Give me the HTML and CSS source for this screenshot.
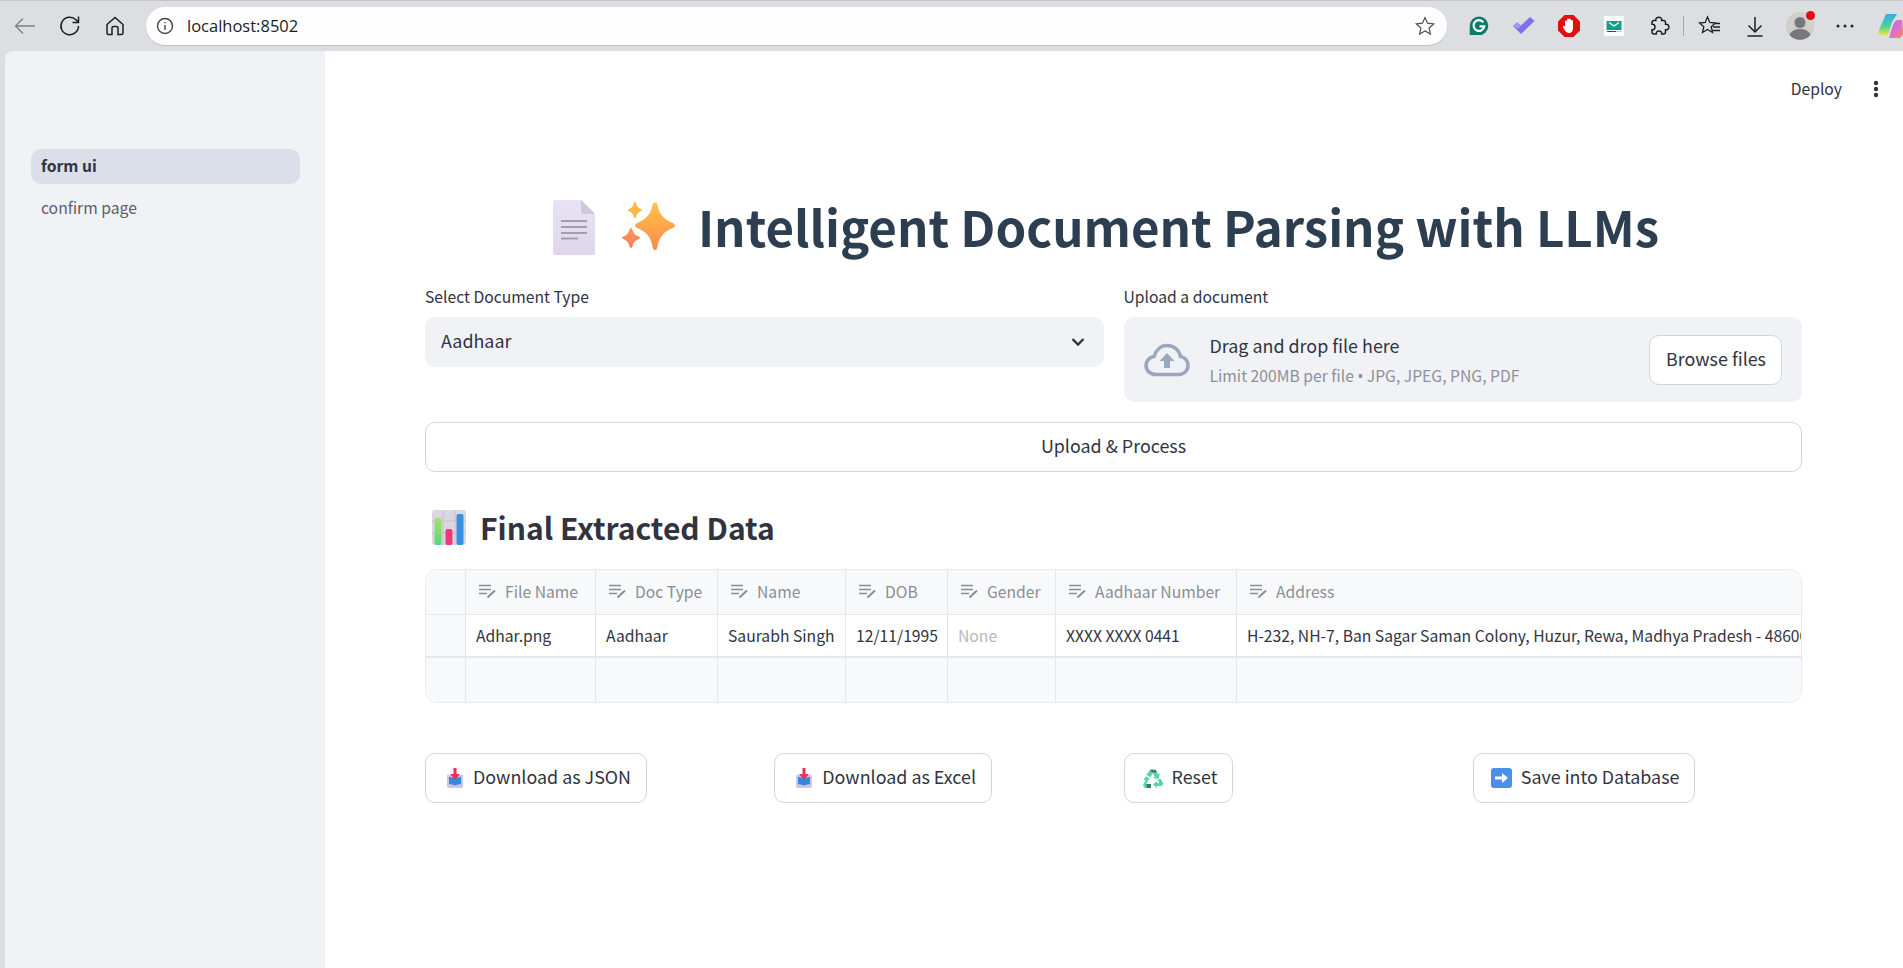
FILE: index.html
```html
<!DOCTYPE html>
<html lang="en">
<head>
<meta charset="utf-8">
<title>form ui</title>
<link rel="stylesheet" href="styles.css">
</head>
<body>
<div class="window">
  <div class="toolbar">
    <div class="tool"><svg width="24" height="24" viewBox="0 0 24 24" class="ln-grey"><path d="M22 12H3M10 4.500l-7.500 7.500 7.500 7.500"/></svg></div>
    <div class="tool"><svg width="24" height="24" viewBox="0 0 24 24" class="ln-dark"><path d="M20.500 12a8.800 8.800 0 1 1-2.600-6.300L20.500 8.500M20.500 2.500v6h-6"/></svg></div>
    <div class="tool"><svg width="24" height="24" viewBox="0 0 24 24" class="ln-dark"><path d="M4 10.500 12 3.500l8 7V19a1.500 1.500 0 0 1-1.500 1.500H15v-6.500a1.500 1.500 0 0 0-1.500-1.500h-3A1.500 1.500 0 0 0 9 14v6.500H5.500A1.500 1.500 0 0 1 4 19z"/></svg></div>
    <div class="urlbar">
      <svg width="18" height="18" viewBox="0 0 18 18" class="ln-info"><circle cx="9" cy="9" r="7.500"/><path d="M9 8v5M9 5v1.300"/></svg>
      <span class="url">localhost:8502</span>
      <svg class="url-star ln-grey2" width="22" height="22" viewBox="0 0 24 24"><path d="M12 2.800l2.800 6.100 6.700.800-5 4.500 1.400 6.600-5.900-3.300-5.900 3.300 1.400-6.600-5-4.500 6.700-.800z"/></svg>
    </div>
    <div class="exts">
      <div class="tool"><svg width="20" height="20" viewBox="0 0 20 20"><path d="M10 .5a9.300 9.300 0 1 1 0 18.600H.7V10A9.300 9.300 0 0 1 10 .5z" fill="#0c7a66"/><path d="M14.300 6.300A5.400 5.400 0 1 0 15.300 10.300H10.500" fill="none" stroke="#fff" stroke-width="2.200"/></svg></div>
      <div class="tool"><svg width="22" height="22" viewBox="0 0 22 22"><path d="M0 11l4-3.500 4 3L17 2l4.500 4L8 19z" fill="#7f6fe8"/><path d="M0 11l4-3.500 4 3-2.500 3.500z" fill="#a398ee"/></svg></div>
      <div class="tool"><svg width="22" height="22" viewBox="0 0 22 22"><path d="M6.500 0h9L22 6.500v9L15.500 22h-9L0 15.500v-9z" fill="#e20f0f"/><path d="M7 11V6.500a1 1 0 0 1 2 0V4.500a1 1 0 0 1 2 0v.2a1 1 0 0 1 2 0V6a1 1 0 0 1 2 0v7.500c0 2.500-1.500 4.500-4 4.500-2 0-3-1-4-2.500L5 12.500c-.6-1 .8-2 1.500-1z" fill="#fff"/></svg></div>
      <div class="tool"><svg width="20" height="20" viewBox="0 0 20 20"><rect width="20" height="20" rx="1" fill="#fbfdfc"/><rect x="2.500" y="5" width="15" height="9" fill="#11a08c"/><path d="M5 6.500l5 3.500 5-3.500" fill="none" stroke="#fff" stroke-width="1.200"/><path d="M3 15.500h9" stroke="#444" stroke-width="1"/><path d="M12.500 15.500h5" stroke="#8fd8cc" stroke-width="1"/></svg></div>
      <div class="tool"><svg width="24" height="24" viewBox="0 0 24 24" class="ln-dark"><path d="M8.800 6.500C8 2 15.500 2 14.700 6.500H16.500a2 2 0 0 1 2 2V10.200C23 9.500 23 16.500 18.500 15.800V18a2 2 0 0 1-2 2H14.700C15.500 16 8.500 16 9.300 20H7a2 2 0 0 1-2-2V15.800C9 16.500 9 9.500 5 10.200V8.500a2 2 0 0 1 2-2z"/></svg></div>
      <div class="sep"></div>
      <div class="tool"><svg width="24" height="24" viewBox="0 0 24 24" class="ln-dark thin"><path d="M9.500 3l2.300 5.500 5.700.5-4.300 3.700 1.300 5.800-5-3-5 3 1.300-5.800L1.500 9l5.700-.5zM16.500 9.500H22M15 13h7M14.500 16.500H22"/></svg></div>
      <div class="tool"><svg width="24" height="24" viewBox="0 0 24 24" class="ln-dark"><path d="M12 3v15M5.500 11.500 12 18l6.500-6.500M4.500 22h15"/></svg></div>
      <div class="tool avatar">
        <svg width="28" height="28" viewBox="0 0 28 28"><circle cx="14" cy="14" r="14" fill="#d0cfcc"/><circle cx="14" cy="10.500" r="5.500" fill="#77767a"/><path d="M3.500 23c1.500-4 5.500-6 10.500-6s9 2 10.500 6a14 14 0 0 1-21 0z" fill="#77767a"/></svg>
        <span class="dot"></span>
      </div>
      <div class="tool"><svg width="20" height="6" viewBox="0 0 20 6" fill="#222"><circle cx="3" cy="3" r="1.500"/><circle cx="10" cy="3" r="1.500"/><circle cx="17" cy="3" r="1.500"/></svg></div>
      <div class="copilot"><svg width="26" height="26" viewBox="0 0 26 26"><defs><linearGradient id="cpa" x1="0" y1="0" x2="0" y2="1"><stop offset="0" stop-color="#3aa9f0"/><stop offset=".55" stop-color="#45d0a0"/><stop offset="1" stop-color="#f0e040"/></linearGradient><linearGradient id="cpb" x1="0" y1="0" x2="1" y2="1"><stop offset="0" stop-color="#9a6ff0"/><stop offset=".6" stop-color="#e86fc0"/><stop offset="1" stop-color="#f58a5a"/></linearGradient></defs><path d="M8 1h11l-5 8-4 13H4C1.500 22 0 20 1 17z" fill="url(#cpa)"/><path d="M11 25l4-13c1-3 3-5 5-5h4l1 12c0 3-2 6-4 6z" fill="url(#cpb)"/></svg></div>
    </div>
  </div>
  <div class="app">
    <aside class="sidebar">
      <a class="nav-item nav-active">form ui</a>
      <a class="nav-item">confirm page</a>
    </aside>
    <main class="main">
      <header class="app-header">
        <span class="deploy">Deploy</span>
        <svg width="6" height="18" viewBox="0 0 6 18" fill="#31333f"><circle cx="3" cy="3" r="2.200"/><circle cx="3" cy="9" r="2.200"/><circle cx="3" cy="15" r="2.200"/></svg>
      </header>
      <h1 class="title">
        <svg class="doc-icon" width="42" height="55" viewBox="0 0 42 55"><defs><linearGradient id="docg" x1="0" y1="0" x2="0" y2="1"><stop offset="0" stop-color="#e9e2f3"/><stop offset="1" stop-color="#dfd6ec"/></linearGradient></defs><path d="M2 0h26l14 14v39a2 2 0 0 1-2 2H2a2 2 0 0 1-2-2V2a2 2 0 0 1 2-2z" fill="url(#docg)"/><path d="M28 0l14 14H31a3 3 0 0 1-3-3z" fill="#cfc8da"/><path d="M8 21h26M8 27h26M8 33h26M8 38.500h17" stroke="#a49dad" stroke-width="2"/></svg>
        <svg class="spark-icon" width="54" height="50" viewBox="0 0 54 50"><defs><linearGradient id="spg" x1="0" y1="0" x2="0" y2="1"><stop offset="0" stop-color="#ffc24a"/><stop offset="1" stop-color="#ff8a4c"/></linearGradient><linearGradient id="spo" x1="0" y1="0" x2="0" y2="1"><stop offset="0" stop-color="#ff9a55"/><stop offset="1" stop-color="#ff7a5a"/></linearGradient></defs><path d="M34 .5c1.600 0 2.300 1.200 2.700 3.200 1.500 8.300 6 13.500 15.600 17.500 2.100.9 2.100 3.600 0 4.500-9.600 4-14.100 9-15.600 18-.4 2.300-1.100 4.300-2.700 4.300s-2.300-2-2.700-4.300c-1.500-9-6-14-15.600-18-2.100-.9-2.100-3.600 0-4.500 9.600-4 14.100-9.200 15.600-17.500.4-2 1.100-3.200 2.700-3.200z" fill="url(#spg)"/><path d="M14 0c.8 0 1 .6 1.200 1.500.6 2.600 2 4.300 4.800 5.400 1.200.5 1.200 1.700 0 2.200-2.800 1.100-4.200 2.900-4.800 5.400-.2 1-.4 1.500-1.200 1.500s-1-.5-1.200-1.500c-.6-2.500-2-4.300-4.800-5.400-1.200-.5-1.200-1.700 0-2.200 2.800-1.100 4.200-2.800 4.800-5.400.2-.9.400-1.500 1.200-1.500z" fill="#fdb844"/><path d="M10 26c1 0 1.300.8 1.500 1.800.8 3.500 2.800 5.500 6.300 6.800 1.500.6 1.500 1.900 0 2.500-3.500 1.300-5.500 3.400-6.300 6.900-.2 1-.5 1.800-1.500 1.800s-1.300-.8-1.500-1.800C7.700 40.500 5.700 38.400 2.200 37.100c-1.500-.6-1.500-1.900 0-2.500 3.500-1.300 5.500-3.300 6.300-6.800.2-1 .5-1.800 1.500-1.800z" fill="url(#spo)"/></svg>
        <span class="title-text">Intelligent Document Parsing with LLMs</span>
      </h1>
      <div class="form-row">
        <div class="field">
          <label class="label">Select Document Type</label>
          <div class="select">
            <span>Aadhaar</span>
            <svg width="20" height="20" viewBox="0 0 20 20" class="chev"><path d="M4.500 7l5.500 5.500L15.500 7"/></svg>
          </div>
        </div>
        <div class="field">
          <label class="label">Upload a document</label>
          <div class="uploader">
            <svg class="cloud" width="46" height="34" viewBox="0 0 46 34"><path d="M12 31.500C6 31.500 2 27.500 2 22.500c0-4.500 3.500-8.500 8-9C12 7 17 2.500 23 2.500c7 0 12.500 5 13.500 11 4.500.5 7.500 4.500 7.500 9 0 5-4 9-9 9z" fill="none" stroke="#9ba6c0" stroke-width="3.500"/><path d="M23 10l7.500 8H26v7h-6v-7h-4.500z" fill="#9ba6c0"/></svg>
            <div class="upl-text">
              <div class="upl-main">Drag and drop file here</div>
              <div class="upl-sub">Limit 200MB per file <span class="bullet">•</span> JPG, JPEG, PNG, PDF</div>
            </div>
            <button class="btn browse">Browse files</button>
          </div>
        </div>
      </div>
      <button class="btn wide">Upload &amp; Process</button>
      <h3 class="subhead">
        <svg width="34" height="35" viewBox="0 0 34 35"><defs><linearGradient id="bgr" x1="0" y1="0" x2="0" y2="1"><stop offset="0" stop-color="#a8e070"/><stop offset="1" stop-color="#58d878"/></linearGradient></defs><rect width="34" height="35" rx="3" fill="#dcd6e2"/><path d="M11 0v35M23 0v35M0 11h34M0 23h34" stroke="#c5bfcd" stroke-width="1"/><rect x="2.500" y="8" width="7" height="27" rx="2" fill="url(#bgr)"/><rect x="13.500" y="19" width="7" height="16" rx="2" fill="#ec3a78"/><rect x="24.500" y="4" width="7" height="31" rx="2" fill="#3a90e0"/></svg>
        <span>Final Extracted Data</span>
      </h3>
      <div class="grid">
        <div class="cell head idx"></div>
        <div class="cell head"><svg class="ci" viewBox="0 0 18 16"><path d="M1 2.500h12M1 6.500h12M1 10.500h8"/><path class="pen" d="M9.500 14.500 17 7.500"/></svg>File Name</div>
        <div class="cell head"><svg class="ci" viewBox="0 0 18 16"><path d="M1 2.500h12M1 6.500h12M1 10.500h8"/><path class="pen" d="M9.500 14.500 17 7.500"/></svg>Doc Type</div>
        <div class="cell head"><svg class="ci" viewBox="0 0 18 16"><path d="M1 2.500h12M1 6.500h12M1 10.500h8"/><path class="pen" d="M9.500 14.500 17 7.500"/></svg>Name</div>
        <div class="cell head"><svg class="ci" viewBox="0 0 18 16"><path d="M1 2.500h12M1 6.500h12M1 10.500h8"/><path class="pen" d="M9.500 14.500 17 7.500"/></svg>DOB</div>
        <div class="cell head"><svg class="ci" viewBox="0 0 18 16"><path d="M1 2.500h12M1 6.500h12M1 10.500h8"/><path class="pen" d="M9.500 14.500 17 7.500"/></svg>Gender</div>
        <div class="cell head"><svg class="ci" viewBox="0 0 18 16"><path d="M1 2.500h12M1 6.500h12M1 10.500h8"/><path class="pen" d="M9.500 14.500 17 7.500"/></svg>Aadhaar Number</div>
        <div class="cell head last"><svg class="ci" viewBox="0 0 18 16"><path d="M1 2.500h12M1 6.500h12M1 10.500h8"/><path class="pen" d="M9.500 14.500 17 7.500"/></svg>Address</div>

        <div class="cell data idx"></div>
        <div class="cell data">Adhar.png</div>
        <div class="cell data">Aadhaar</div>
        <div class="cell data">Saurabh Singh</div>
        <div class="cell data">12/11/1995</div>
        <div class="cell data none">None</div>
        <div class="cell data">XXXX XXXX 0441</div>
        <div class="cell data last">H-232, NH-7, Ban Sagar Saman Colony, Huzur, Rewa, Madhya Pradesh - 486001</div>

        <div class="cell empty idx"></div>
        <div class="cell empty"></div>
        <div class="cell empty"></div>
        <div class="cell empty"></div>
        <div class="cell empty"></div>
        <div class="cell empty"></div>
        <div class="cell empty"></div>
        <div class="cell empty last"></div>
      </div>
      <div class="actions">
        <div class="action"><button class="btn btn-dl">
          <svg class="emo" width="16" height="20" viewBox="0 0 16 20"><path d="M0 7h16v11a2 2 0 0 1-2 2H2a2 2 0 0 1-2-2z" fill="#cfc4e0"/><path d="M2 9c2 0 4 .5 6 2 2-1.500 4-2 6-2v7c-2 0-4 .5-6 1.500C6 16.500 4 16 2 16z" fill="#2f8bdc"/><path d="M6.500 0h3v6H13l-5 6-5-6h3.500z" fill="#e8305a"/></svg>
          Download as JSON</button></div>
        <div class="action"><button class="btn btn-dl">
          <svg class="emo" width="16" height="20" viewBox="0 0 16 20"><path d="M0 7h16v11a2 2 0 0 1-2 2H2a2 2 0 0 1-2-2z" fill="#cfc4e0"/><path d="M2 9c2 0 4 .5 6 2 2-1.500 4-2 6-2v7c-2 0-4 .5-6 1.500C6 16.500 4 16 2 16z" fill="#2f8bdc"/><path d="M6.500 0h3v6H13l-5 6-5-6h3.500z" fill="#e8305a"/></svg>
          Download as Excel</button></div>
        <div class="action"><button class="btn btn-reset">
          <svg class="emo tight" width="20" height="19" viewBox="0 0 20 19"><path d="M7 .8h5.500l2.600 4.500 1.900-1-1.600 6-5.700-1.500 1.900-1L9.800 4 7.500 8.200 3.500 6z" fill="#57d6a2"/><path d="M7 .8h5.500L14 3.400H9z" fill="#2f7f6a"/><path d="M17.500 9.500 19.800 13.500c.6 1.500-.3 3.500-2 3.500H14v2l-4-3.500 4-3.500v2h2.500L14.500 11z" fill="#57d6a2"/><path d="M3 7.500 7 9.800l-1.300.7-2.500 4.500H8v4H3c-2 0-3.400-2-2.500-4l2-3.500-1.800-1z" fill="#57d6a2"/><path d="M3.500 15H8v4H3.500z" fill="#2f7f6a"/></svg>
          Reset</button></div>
        <div class="action"><button class="btn btn-save">
          <svg class="emo tight" width="21" height="20" viewBox="0 0 21 20"><rect width="21" height="20" rx="3" fill="#4a8fe8"/><path d="M4 8.500h7V5l6 5-6 5v-3.500H4z" fill="#fff"/></svg>
          Save into Database</button></div>
      </div>
    </main>
  </div>
</div>
</body>
</html>
```
FILE: styles.css
```css
* { box-sizing: border-box; }
html, body { margin: 0; padding: 0; height: 100%; overflow: hidden; }
body { font-family: "Noto Sans CJK SC", "Noto Sans", sans-serif; color: #31333f; background: #dcdee2; }
.window { display: flex; flex-direction: column; height: 968px; width: 1903px; overflow: hidden; }

.toolbar { display: flex; align-items: center; height: 51px; flex: none; padding-left: 2px; background: #dcdee2; border-top: 1px solid #c4c6ca; }
.tool { width: 45px; height: 40px; flex: none; display: flex; align-items: center; justify-content: center; position: relative; }
.toolbar svg { fill: none; }
.ln-grey { stroke: #7d7f83; stroke-width: 1.300; fill: none; }
.ln-grey2 { stroke: #4d4e52; stroke-width: 1.300; fill: none; }
.ln-dark { stroke: #1f1f21; stroke-width: 1.500; fill: none; }
.toolbar .thin { stroke-width: 1.300; }
.ln-info { stroke: #444; stroke-width: 1.400; fill: none; }
.tool svg[fill="#222"] { fill: #222; }
.urlbar { display: flex; align-items: center; flex: 1; min-width: 0; height: 38px; margin-left: 9px; padding: 0 11px 0 10px; background: #fefefe; border-radius: 19px; box-shadow: 0 1px 1px #bfc1c5; }
.url { margin-left: 13px; padding-bottom: 2px; font-family: "Open Sans", sans-serif; font-size: 16.500px; color: #1c1c22; flex: 1; }
.exts { display: flex; align-items: center; flex: none; width: 447px; margin-left: 9px; }
.sep { width: 1px; height: 20px; background: #a8aaae; margin: 0 3px 0 2px; flex: none; }
.dot { position: absolute; top: 5px; right: 7px; width: 9px; height: 9px; border-radius: 50%; background: #e30d0d; border: 0; }
.copilot { flex: none; width: 35px; padding-left: 11px; display: flex; overflow: visible; }
.copilot svg { flex: none; }

.app { display: flex; flex: 1; min-height: 0; margin-left: 5px; }
.sidebar { width: 320px; flex: none; background: #f0f2f6; border-top-left-radius: 8px; padding: 98px 25px 0 26px; display: flex; flex-direction: column; gap: 7px; }
.nav-item { display: flex; align-items: center; height: 35px; padding-left: 10px; padding-bottom: 2px; border-radius: 10px; font-size: 15.700px; color: #5b5e6b; }
.nav-active { background: #dbdfe9; color: #31333f; font-weight: 700; }

.main { flex: 1; min-width: 0; background: #fff; padding: 0 101px 0 100px; display: flex; flex-direction: column; }
.app-header { height: 76px; flex: none; margin-right: -101px; padding-right: 24px; display: flex; align-items: center; justify-content: flex-end; gap: 31px; }
.deploy { font-size: 15.700px; padding-bottom: 2px; color: #31333f; }

.title { margin: 71px 0 27px; height: 60px; display: flex; align-items: center; justify-content: center; padding-right: 15px; font-size: 49.200px; font-weight: 700; line-height: 60px; color: #2c3e50; white-space: nowrap; }
.doc-icon { flex: none; margin: 0 26px 2px 0; }
.spark-icon { flex: none; margin: 0 23px 2px 0; }
.title-text { margin-bottom: 5px; }

.form-row { display: grid; grid-template-columns: 1fr 1fr; gap: 20px; }
.label { display: block; height: 28px; margin-bottom: 4px; font-size: 15.700px; line-height: 24px; color: #31333f; }
.select { height: 50px; background: #f0f2f6; border-radius: 10px; display: flex; align-items: center; justify-content: space-between; padding: 0 16px; font-size: 17.900px; }
.select span { padding-bottom: 4px; }
.chev { fill: none; stroke: #31333f; stroke-width: 2.400; }
.uploader { height: 85px; background: #f0f2f6; border-radius: 10px; display: flex; align-items: center; padding: 0 20px; }
.cloud { flex: none; margin-right: 20px; }
.upl-text { flex: 1; }
.upl-main { font-size: 17.900px; line-height: 30px; }
.upl-sub { font-size: 15.700px; line-height: 26px; color: #8e909a; margin-top: 3px; }
.bullet { font-family: "Noto Sans", sans-serif; }

.btn { font: inherit; font-size: 17.900px; color: #31333f; height: 50px; padding: 0 20px 4px; background: #fff; border: 1px solid #d5d6da; border-radius: 10px; display: inline-flex; align-items: center; justify-content: center; white-space: nowrap; }
.browse { padding: 0 15px 4px 16px; flex: none; }
.wide { width: 100%; margin-top: 20px; flex: none; }
.btn-dl { padding: 0 15px 4px 21px; }
.btn-reset { padding: 0 15px 4px 18px; }
.btn-save { padding: 0 15px 4px 17px; }

.subhead { margin: 36px 0 21px; height: 40px; display: flex; align-items: center; gap: 14px; padding-left: 7px; font-size: 30px; font-weight: 600; line-height: 40px; color: #31333f; }
.subhead svg { flex: none; margin-bottom: 2px; }
.subhead span { margin-bottom: 3px; }

.grid { display: grid; grid-template-columns: 40px 130px 122px 128px 102px 108px 181px 1fr; grid-template-rows: 45px 43px 44px; height: 134px; border: 1px solid #e9eaee; border-radius: 12px; overflow: hidden; flex: none; }
.cell { display: flex; align-items: center; padding: 0 10px; border-right: 1px solid #e6e7eb; font-size: 15.700px; white-space: nowrap; overflow: hidden; min-width: 0; }
.head { background: #f8f9fb; color: #8b8d97; border-bottom: 1px solid #e6e7eb; padding: 0 10px 2px 12px; }
.data { background: #fff; color: #31333f; border-bottom: 2px solid #e6e7eb; }
.empty { background: #f8f9fb; }
.idx { background: #f8f9fb; padding: 0; }
.last { border-right: 0; }
.none { color: #b6b8be; }
.ci { width: 18px; height: 16px; flex: none; margin-right: 9px; fill: none; stroke: #8b8d97; stroke-width: 1.300; }
.pen { stroke-width: 2; }

.actions { margin-top: 50px; display: grid; grid-template-columns: repeat(4, 1fr); gap: 20px; }
.action { display: flex; }
.emo { flex: none; margin: 4px 10px 0 0; }
.tight { margin-right: 9px; }
```
